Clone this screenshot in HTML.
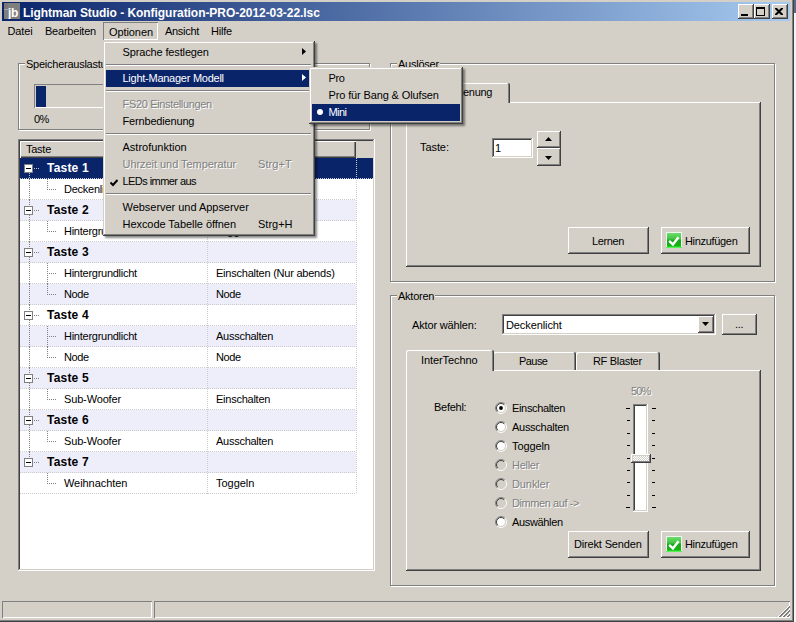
<!DOCTYPE html>
<html lang="de">
<head>
<meta charset="utf-8">
<title>Lightman Studio - Konfiguration-PRO-2012-03-22.lsc</title>
<style>
html,body{margin:0;padding:0}
body{width:796px;height:622px;position:relative;overflow:hidden;background:#d4d0c8;
 font-family:"Liberation Sans",sans-serif;font-size:11px;line-height:13px;color:#000;cursor:default}
.a{position:absolute}
.t{position:absolute;white-space:nowrap;line-height:13px;height:13px;letter-spacing:-.25px}
.tah{font-size:11px}
.dis{color:#808080;text-shadow:1px 1px 0 #fff}
.btn{position:absolute;background:#d4d0c8;box-sizing:border-box;
 box-shadow:inset -1px -1px #404040,inset 1px 1px #fff,inset -2px -2px #808080,inset 2px 2px #d4d0c8}
.sunk{position:absolute;background:#fff;box-sizing:border-box;
 box-shadow:inset -1px -1px #fff,inset 1px 1px #808080,inset -2px -2px #d4d0c8,inset 2px 2px #404040}
.grp{position:absolute;box-sizing:border-box;border:1px solid #808080;box-shadow:1px 1px 0 #fff,inset 1px 1px 0 #fff}
.grplbl{letter-spacing:-.25px;position:absolute;background:#d4d0c8;white-space:nowrap;line-height:13px;height:13px;padding:0 1px}
.menu{position:absolute;background:#d4d0c8;box-sizing:border-box;
 box-shadow:inset -1px -1px #404040,inset 1px 1px #d4d0c8,inset -2px -2px #808080,inset 2px 2px #fff,2px 2px 2px rgba(0,0,0,.45)}
.mi{position:absolute;left:3px;right:3px;height:17px}
.mi .t{top:2px}
.sep{position:absolute;left:3px;right:4px;height:1px;background:#808080;box-shadow:0 1px 0 #fff}
.hl{background:#0a246a;color:#fff}
.pane{position:absolute;box-sizing:border-box;background:#d4d0c8;
 box-shadow:inset -1px -1px #404040,inset 1px 1px #fff,inset -2px -2px #808080}
.tab{position:absolute;box-sizing:border-box;background:#d4d0c8;border-radius:2px 2px 0 0;
 box-shadow:inset -1px 0 #404040,inset 1px 1px #fff,inset -2px 0 #808080}
.row{position:absolute;left:20px;width:336px;height:21px;box-sizing:border-box}
.lav{background:#eeeefb}
.rad{position:absolute;width:12px;height:12px;border-radius:50%;box-sizing:border-box;background:#fff;
 box-shadow:inset 1px 1px 0 #808080,inset -1px -1px 0 #fff,inset 2px 2px 0 #404040,inset -2px -2px 0 #d4d0c8}
.rad.off{background:#d4d0c8}
.tick{position:absolute;height:1px;background:#000}
</style>
</head>
<body>

<!-- window frame -->
<div class="a" style="left:792px;top:0;width:1px;height:622px;background:#808080"></div>
<div class="a" style="left:793px;top:0;width:1px;height:622px;background:#404040"></div>
<div class="a" style="left:794px;top:0;width:2px;height:622px;background:#f4f4f4"></div>
<div class="a" style="left:794px;top:0;width:2px;height:13px;background:#5a6a8a"></div>
<div class="a" style="left:0;top:620px;width:793px;height:1px;background:#808080"></div>
<div class="a" style="left:0;top:621px;width:794px;height:1px;background:#404040"></div>

<!-- title bar -->
<div class="a" id="titlebar" style="left:2px;top:2px;width:788px;height:19px;background:linear-gradient(to right,#0a246a 0%,#a6caf0 100%)"></div>
<div class="a" style="left:4px;top:3px;width:16px;height:16px;background:#7f7f7f;overflow:hidden">
 <div class="a" style="left:0;top:0;width:4px;height:6px;background:#787878"></div><div class="a" style="left:0;top:6px;width:6px;height:1px;background:#a8a8a8"></div>
 <div class="t" style="left:4px;top:4px;color:#fff;font-weight:bold;font-size:12px;letter-spacing:-.3px">jb</div>
</div>
<div class="t" id="title" style="left:23px;top:7px;color:#fff;font-weight:bold;font-size:12px;letter-spacing:-.05px">Lightman Studio - Konfiguration-PRO-2012-03-22.lsc</div>

<!-- caption buttons -->
<div class="btn" style="left:738px;top:4px;width:16px;height:15px">
 <div class="a" style="left:3px;top:10px;width:7px;height:2px;background:#000"></div>
</div>
<div class="btn" style="left:754px;top:4px;width:16px;height:15px">
 <div class="a" style="left:2px;top:3px;width:9px;height:9px;box-sizing:border-box;border:1px solid #000;border-top-width:2px"></div>
</div>
<div class="btn" style="left:772px;top:4px;width:16px;height:15px">
 <svg class="a" style="left:3px;top:4px" width="8" height="7" viewBox="0 0 8 7"><path d="M1 0.5 L7 6.5 M7 0.5 L1 6.5" stroke="#000" stroke-width="2.1" stroke-linecap="square" fill="none"/></svg>
</div>

<!-- menu bar -->
<div class="t tah" style="left:7.5px;top:25px;letter-spacing:-0.14px">Datei</div>
<div class="t tah" style="left:45px;top:25px;letter-spacing:-0.22px">Bearbeiten</div>
<div class="a" style="left:103px;top:22px;width:55px;height:18px;box-sizing:border-box;box-shadow:inset 1px 1px #808080,inset -1px -1px #fff"></div>
<div class="t tah" style="left:109px;top:26px;letter-spacing:-0.085px">Optionen</div>
<div class="t tah" style="left:165px;top:25px;letter-spacing:-0.3px">Ansicht</div>
<div class="t tah" style="left:211px;top:25px;letter-spacing:-0.2px">Hilfe</div>

<!-- LEFT: Speicherauslastung -->
<div class="grp" style="left:18px;top:63px;width:352px;height:67px"></div>
<div class="grplbl" style="left:25px;top:58px">Speicherauslastung</div>
<div class="a" style="left:34px;top:84px;width:270px;height:24px;box-sizing:border-box;box-shadow:inset 1px 1px #808080,inset -1px -1px #fff"></div>
<div class="a" style="left:36px;top:86px;width:10px;height:21px;background:#0a246a"></div>
<div class="t" style="left:34px;top:113px;letter-spacing:-.7px">0%</div>

<!-- LEFT: tree list -->
<div class="sunk" id="list" style="left:18px;top:139px;width:357px;height:432px"></div>
<!--ROWS-->
<div class="a" style="left:20px;top:141px;width:353px;height:17px;background:#d4d0c8"></div>
<div class="a" style="left:20px;top:141px;width:336px;height:17px;box-sizing:border-box;box-shadow:inset 1px 1px #fff,inset -1px -1px #404040,inset -2px -2px #808080"></div>
<div class="t" style="left:26px;top:143px">Taste</div>
<div class="row hl" style="top:158px;width:353px">
<div class="a" style="left:0;top:20px;width:353px;height:1px;background:repeating-linear-gradient(to right,#cccccc 0,#cccccc 1px,transparent 1px,transparent 2px)"></div>
<div class="a" style="left:9px;top:15px;width:1px;height:6px;background:repeating-linear-gradient(to bottom,#c0c0c0 0,#c0c0c0 1px,transparent 1px,transparent 2px)"></div>
<div class="a" style="left:14px;top:10px;width:5px;height:1px;background:repeating-linear-gradient(to right,#c0c0c0 0,#c0c0c0 1px,transparent 1px,transparent 2px)"></div>
<div class="a" style="left:4px;top:6px;width:9px;height:9px;box-sizing:border-box;border:1px solid #808080;background:#fff"><div class="a" style="left:1px;top:3px;width:5px;height:1px;background:#000"></div></div>
<div class="t b" style="left:27px;top:4px;font-weight:bold;font-size:12px;letter-spacing:.2px">Taste 1</div>
</div>
<div class="row" style="top:179px">
<div class="a" style="left:0;top:20px;width:336px;height:1px;background:repeating-linear-gradient(to right,#cccccc 0,#cccccc 1px,transparent 1px,transparent 2px)"></div>
<div class="a" style="left:9px;top:0;width:1px;height:21px;background:repeating-linear-gradient(to bottom,#808080 0,#808080 1px,transparent 1px,transparent 2px)"></div>
<div class="a" style="left:27px;top:0;width:1px;height:10px;background:repeating-linear-gradient(to bottom,#808080 0,#808080 1px,transparent 1px,transparent 2px)"></div>
<div class="a" style="left:27px;top:10px;width:9px;height:1px;background:repeating-linear-gradient(to right,#808080 0,#808080 1px,transparent 1px,transparent 2px)"></div>
<div class="t" style="left:44px;top:4px;letter-spacing:-0.25px">Deckenlicht</div>
<div class="t" style="left:196px;top:4px;letter-spacing:-0.25px">Einschalten</div>
</div>
<div class="row lav" style="top:200px">
<div class="a" style="left:0;top:20px;width:336px;height:1px;background:repeating-linear-gradient(to right,#cccccc 0,#cccccc 1px,transparent 1px,transparent 2px)"></div>
<div class="a" style="left:9px;top:0;width:1px;height:6px;background:repeating-linear-gradient(to bottom,#808080 0,#808080 1px,transparent 1px,transparent 2px)"></div>
<div class="a" style="left:9px;top:15px;width:1px;height:6px;background:repeating-linear-gradient(to bottom,#808080 0,#808080 1px,transparent 1px,transparent 2px)"></div>
<div class="a" style="left:14px;top:10px;width:5px;height:1px;background:repeating-linear-gradient(to right,#808080 0,#808080 1px,transparent 1px,transparent 2px)"></div>
<div class="a" style="left:4px;top:6px;width:9px;height:9px;box-sizing:border-box;border:1px solid #808080;background:#fff"><div class="a" style="left:1px;top:3px;width:5px;height:1px;background:#000"></div></div>
<div class="t b" style="left:27px;top:4px;font-weight:bold;font-size:12px;letter-spacing:.2px">Taste 2</div>
</div>
<div class="row" style="top:221px">
<div class="a" style="left:0;top:20px;width:336px;height:1px;background:repeating-linear-gradient(to right,#cccccc 0,#cccccc 1px,transparent 1px,transparent 2px)"></div>
<div class="a" style="left:9px;top:0;width:1px;height:21px;background:repeating-linear-gradient(to bottom,#808080 0,#808080 1px,transparent 1px,transparent 2px)"></div>
<div class="a" style="left:27px;top:0;width:1px;height:10px;background:repeating-linear-gradient(to bottom,#808080 0,#808080 1px,transparent 1px,transparent 2px)"></div>
<div class="a" style="left:27px;top:10px;width:9px;height:1px;background:repeating-linear-gradient(to right,#808080 0,#808080 1px,transparent 1px,transparent 2px)"></div>
<div class="t" style="left:44px;top:4px;letter-spacing:-0.26px">Hintergrundlicht</div>
<div class="t" style="left:196px;top:4px;letter-spacing:-0.03px">Toggeln</div>
</div>
<div class="row lav" style="top:242px">
<div class="a" style="left:0;top:20px;width:336px;height:1px;background:repeating-linear-gradient(to right,#cccccc 0,#cccccc 1px,transparent 1px,transparent 2px)"></div>
<div class="a" style="left:9px;top:0;width:1px;height:6px;background:repeating-linear-gradient(to bottom,#808080 0,#808080 1px,transparent 1px,transparent 2px)"></div>
<div class="a" style="left:9px;top:15px;width:1px;height:6px;background:repeating-linear-gradient(to bottom,#808080 0,#808080 1px,transparent 1px,transparent 2px)"></div>
<div class="a" style="left:14px;top:10px;width:5px;height:1px;background:repeating-linear-gradient(to right,#808080 0,#808080 1px,transparent 1px,transparent 2px)"></div>
<div class="a" style="left:4px;top:6px;width:9px;height:9px;box-sizing:border-box;border:1px solid #808080;background:#fff"><div class="a" style="left:1px;top:3px;width:5px;height:1px;background:#000"></div></div>
<div class="t b" style="left:27px;top:4px;font-weight:bold;font-size:12px;letter-spacing:.2px">Taste 3</div>
</div>
<div class="row" style="top:263px">
<div class="a" style="left:0;top:20px;width:336px;height:1px;background:repeating-linear-gradient(to right,#cccccc 0,#cccccc 1px,transparent 1px,transparent 2px)"></div>
<div class="a" style="left:9px;top:0;width:1px;height:21px;background:repeating-linear-gradient(to bottom,#808080 0,#808080 1px,transparent 1px,transparent 2px)"></div>
<div class="a" style="left:27px;top:0;width:1px;height:21px;background:repeating-linear-gradient(to bottom,#808080 0,#808080 1px,transparent 1px,transparent 2px)"></div>
<div class="a" style="left:27px;top:10px;width:9px;height:1px;background:repeating-linear-gradient(to right,#808080 0,#808080 1px,transparent 1px,transparent 2px)"></div>
<div class="t" style="left:44px;top:4px;letter-spacing:-0.26px">Hintergrundlicht</div>
<div class="t" style="left:196px;top:4px;letter-spacing:-0.23px">Einschalten (Nur abends)</div>
</div>
<div class="row lav" style="top:284px">
<div class="a" style="left:0;top:20px;width:336px;height:1px;background:repeating-linear-gradient(to right,#cccccc 0,#cccccc 1px,transparent 1px,transparent 2px)"></div>
<div class="a" style="left:9px;top:0;width:1px;height:21px;background:repeating-linear-gradient(to bottom,#808080 0,#808080 1px,transparent 1px,transparent 2px)"></div>
<div class="a" style="left:27px;top:0;width:1px;height:10px;background:repeating-linear-gradient(to bottom,#808080 0,#808080 1px,transparent 1px,transparent 2px)"></div>
<div class="a" style="left:27px;top:10px;width:9px;height:1px;background:repeating-linear-gradient(to right,#808080 0,#808080 1px,transparent 1px,transparent 2px)"></div>
<div class="t" style="left:44px;top:4px;letter-spacing:-0.42px">Node</div>
<div class="t" style="left:196px;top:4px;letter-spacing:-0.42px">Node</div>
</div>
<div class="row" style="top:305px">
<div class="a" style="left:0;top:20px;width:336px;height:1px;background:repeating-linear-gradient(to right,#cccccc 0,#cccccc 1px,transparent 1px,transparent 2px)"></div>
<div class="a" style="left:9px;top:0;width:1px;height:6px;background:repeating-linear-gradient(to bottom,#808080 0,#808080 1px,transparent 1px,transparent 2px)"></div>
<div class="a" style="left:9px;top:15px;width:1px;height:6px;background:repeating-linear-gradient(to bottom,#808080 0,#808080 1px,transparent 1px,transparent 2px)"></div>
<div class="a" style="left:14px;top:10px;width:5px;height:1px;background:repeating-linear-gradient(to right,#808080 0,#808080 1px,transparent 1px,transparent 2px)"></div>
<div class="a" style="left:4px;top:6px;width:9px;height:9px;box-sizing:border-box;border:1px solid #808080;background:#fff"><div class="a" style="left:1px;top:3px;width:5px;height:1px;background:#000"></div></div>
<div class="t b" style="left:27px;top:4px;font-weight:bold;font-size:12px;letter-spacing:.2px">Taste 4</div>
</div>
<div class="row lav" style="top:326px">
<div class="a" style="left:0;top:20px;width:336px;height:1px;background:repeating-linear-gradient(to right,#cccccc 0,#cccccc 1px,transparent 1px,transparent 2px)"></div>
<div class="a" style="left:9px;top:0;width:1px;height:21px;background:repeating-linear-gradient(to bottom,#808080 0,#808080 1px,transparent 1px,transparent 2px)"></div>
<div class="a" style="left:27px;top:0;width:1px;height:21px;background:repeating-linear-gradient(to bottom,#808080 0,#808080 1px,transparent 1px,transparent 2px)"></div>
<div class="a" style="left:27px;top:10px;width:9px;height:1px;background:repeating-linear-gradient(to right,#808080 0,#808080 1px,transparent 1px,transparent 2px)"></div>
<div class="t" style="left:44px;top:4px;letter-spacing:-0.26px">Hintergrundlicht</div>
<div class="t" style="left:196px;top:4px;letter-spacing:-0.26px">Ausschalten</div>
</div>
<div class="row" style="top:347px">
<div class="a" style="left:0;top:20px;width:336px;height:1px;background:repeating-linear-gradient(to right,#cccccc 0,#cccccc 1px,transparent 1px,transparent 2px)"></div>
<div class="a" style="left:9px;top:0;width:1px;height:21px;background:repeating-linear-gradient(to bottom,#808080 0,#808080 1px,transparent 1px,transparent 2px)"></div>
<div class="a" style="left:27px;top:0;width:1px;height:10px;background:repeating-linear-gradient(to bottom,#808080 0,#808080 1px,transparent 1px,transparent 2px)"></div>
<div class="a" style="left:27px;top:10px;width:9px;height:1px;background:repeating-linear-gradient(to right,#808080 0,#808080 1px,transparent 1px,transparent 2px)"></div>
<div class="t" style="left:44px;top:4px;letter-spacing:-0.42px">Node</div>
<div class="t" style="left:196px;top:4px;letter-spacing:-0.42px">Node</div>
</div>
<div class="row lav" style="top:368px">
<div class="a" style="left:0;top:20px;width:336px;height:1px;background:repeating-linear-gradient(to right,#cccccc 0,#cccccc 1px,transparent 1px,transparent 2px)"></div>
<div class="a" style="left:9px;top:0;width:1px;height:6px;background:repeating-linear-gradient(to bottom,#808080 0,#808080 1px,transparent 1px,transparent 2px)"></div>
<div class="a" style="left:9px;top:15px;width:1px;height:6px;background:repeating-linear-gradient(to bottom,#808080 0,#808080 1px,transparent 1px,transparent 2px)"></div>
<div class="a" style="left:14px;top:10px;width:5px;height:1px;background:repeating-linear-gradient(to right,#808080 0,#808080 1px,transparent 1px,transparent 2px)"></div>
<div class="a" style="left:4px;top:6px;width:9px;height:9px;box-sizing:border-box;border:1px solid #808080;background:#fff"><div class="a" style="left:1px;top:3px;width:5px;height:1px;background:#000"></div></div>
<div class="t b" style="left:27px;top:4px;font-weight:bold;font-size:12px;letter-spacing:.2px">Taste 5</div>
</div>
<div class="row" style="top:389px">
<div class="a" style="left:0;top:20px;width:336px;height:1px;background:repeating-linear-gradient(to right,#cccccc 0,#cccccc 1px,transparent 1px,transparent 2px)"></div>
<div class="a" style="left:9px;top:0;width:1px;height:21px;background:repeating-linear-gradient(to bottom,#808080 0,#808080 1px,transparent 1px,transparent 2px)"></div>
<div class="a" style="left:27px;top:0;width:1px;height:10px;background:repeating-linear-gradient(to bottom,#808080 0,#808080 1px,transparent 1px,transparent 2px)"></div>
<div class="a" style="left:27px;top:10px;width:9px;height:1px;background:repeating-linear-gradient(to right,#808080 0,#808080 1px,transparent 1px,transparent 2px)"></div>
<div class="t" style="left:44px;top:4px;letter-spacing:-0.15px">Sub-Woofer</div>
<div class="t" style="left:196px;top:4px;letter-spacing:-0.25px">Einschalten</div>
</div>
<div class="row lav" style="top:410px">
<div class="a" style="left:0;top:20px;width:336px;height:1px;background:repeating-linear-gradient(to right,#cccccc 0,#cccccc 1px,transparent 1px,transparent 2px)"></div>
<div class="a" style="left:9px;top:0;width:1px;height:6px;background:repeating-linear-gradient(to bottom,#808080 0,#808080 1px,transparent 1px,transparent 2px)"></div>
<div class="a" style="left:9px;top:15px;width:1px;height:6px;background:repeating-linear-gradient(to bottom,#808080 0,#808080 1px,transparent 1px,transparent 2px)"></div>
<div class="a" style="left:14px;top:10px;width:5px;height:1px;background:repeating-linear-gradient(to right,#808080 0,#808080 1px,transparent 1px,transparent 2px)"></div>
<div class="a" style="left:4px;top:6px;width:9px;height:9px;box-sizing:border-box;border:1px solid #808080;background:#fff"><div class="a" style="left:1px;top:3px;width:5px;height:1px;background:#000"></div></div>
<div class="t b" style="left:27px;top:4px;font-weight:bold;font-size:12px;letter-spacing:.2px">Taste 6</div>
</div>
<div class="row" style="top:431px">
<div class="a" style="left:0;top:20px;width:336px;height:1px;background:repeating-linear-gradient(to right,#cccccc 0,#cccccc 1px,transparent 1px,transparent 2px)"></div>
<div class="a" style="left:9px;top:0;width:1px;height:21px;background:repeating-linear-gradient(to bottom,#808080 0,#808080 1px,transparent 1px,transparent 2px)"></div>
<div class="a" style="left:27px;top:0;width:1px;height:10px;background:repeating-linear-gradient(to bottom,#808080 0,#808080 1px,transparent 1px,transparent 2px)"></div>
<div class="a" style="left:27px;top:10px;width:9px;height:1px;background:repeating-linear-gradient(to right,#808080 0,#808080 1px,transparent 1px,transparent 2px)"></div>
<div class="t" style="left:44px;top:4px;letter-spacing:-0.15px">Sub-Woofer</div>
<div class="t" style="left:196px;top:4px;letter-spacing:-0.26px">Ausschalten</div>
</div>
<div class="row lav" style="top:452px">
<div class="a" style="left:0;top:20px;width:336px;height:1px;background:repeating-linear-gradient(to right,#cccccc 0,#cccccc 1px,transparent 1px,transparent 2px)"></div>
<div class="a" style="left:9px;top:0;width:1px;height:6px;background:repeating-linear-gradient(to bottom,#808080 0,#808080 1px,transparent 1px,transparent 2px)"></div>
<div class="a" style="left:14px;top:10px;width:5px;height:1px;background:repeating-linear-gradient(to right,#808080 0,#808080 1px,transparent 1px,transparent 2px)"></div>
<div class="a" style="left:4px;top:6px;width:9px;height:9px;box-sizing:border-box;border:1px solid #808080;background:#fff"><div class="a" style="left:1px;top:3px;width:5px;height:1px;background:#000"></div></div>
<div class="t b" style="left:27px;top:4px;font-weight:bold;font-size:12px;letter-spacing:.2px">Taste 7</div>
</div>
<div class="row" style="top:473px">
<div class="a" style="left:0;top:20px;width:336px;height:1px;background:repeating-linear-gradient(to right,#cccccc 0,#cccccc 1px,transparent 1px,transparent 2px)"></div>
<div class="a" style="left:27px;top:0;width:1px;height:10px;background:repeating-linear-gradient(to bottom,#808080 0,#808080 1px,transparent 1px,transparent 2px)"></div>
<div class="a" style="left:27px;top:10px;width:9px;height:1px;background:repeating-linear-gradient(to right,#808080 0,#808080 1px,transparent 1px,transparent 2px)"></div>
<div class="t" style="left:44px;top:4px;letter-spacing:-0.06px">Weihnachten</div>
<div class="t" style="left:196px;top:4px;letter-spacing:-0.03px">Toggeln</div>
</div>
<div class="a" style="left:207px;top:179px;width:1px;height:315px;background:repeating-linear-gradient(to bottom,#cccccc 0,#cccccc 1px,transparent 1px,transparent 2px)"></div>
<div class="a" style="left:356px;top:158px;width:1px;height:336px;background:repeating-linear-gradient(to bottom,#cccccc 0,#cccccc 1px,transparent 1px,transparent 2px)"></div>
<!--/ROWS-->

<!-- RIGHT: Auslöser -->
<div class="grp" style="left:390px;top:63px;width:385px;height:219px"></div>
<div class="grplbl" style="left:397px;top:58px">Auslöser</div>


<!-- Auslöser tab control -->
<div class="pane" style="left:406px;top:102px;width:355px;height:165px"></div>
<div class="tab" style="left:406px;top:83px;width:104px;height:20px;box-shadow:inset -1px 0 #404040,inset 1px 1px #fff,inset -2px 0 #808080"></div>
<div class="t" style="left:422px;top:86px;letter-spacing:-0.3px">Fernbedienung</div>
<div class="t" style="left:420px;top:141px;letter-spacing:-.08px">Taste:</div>
<div class="sunk" style="left:492px;top:138px;width:41px;height:20px"></div>
<div class="t" style="left:495px;top:142px">1</div>
<div class="btn" style="left:537px;top:131px;width:24px;height:17px"><svg class="a" style="left:8px;top:6px" width="7" height="4" viewBox="0 0 7 4"><path d="M0 4 L3.5 0 L7 4 Z" fill="#000"/></svg></div>
<div class="btn" style="left:537px;top:148px;width:24px;height:18px"><svg class="a" style="left:8px;top:8px" width="7" height="4" viewBox="0 0 7 4"><path d="M0 0 L7 0 L3.5 4 Z" fill="#000"/></svg></div>
<div class="btn" style="left:568px;top:227px;width:81px;height:27px"></div>
<div class="t" style="left:592px;top:235px;letter-spacing:-.38px">Lernen</div>
<div class="btn" style="left:661px;top:227px;width:89px;height:27px"></div>
<svg class="a" style="left:666px;top:232px" width="16" height="16" viewBox="0 0 16 16"><defs><linearGradient id="g1" x1="0" y1="0" x2="0" y2="1"><stop offset="0" stop-color="#6fdc6f"/><stop offset="0.45" stop-color="#3cc43c"/><stop offset="0.5" stop-color="#17a617"/><stop offset="0.9" stop-color="#14b414"/><stop offset="1" stop-color="#30e030"/></linearGradient></defs><rect x="0" y="0" width="16" height="16" fill="#eef8ee"/><rect x="0" y="15" width="16" height="1" fill="#58f058"/><rect x="1" y="1" width="14" height="14" fill="url(#g1)"/><path d="M3.1 8.9 L6.9 12.4 L12.5 5.2" stroke="#fff" stroke-width="2.5" fill="none"/></svg>
<div class="t" style="left:685px;top:235px;letter-spacing:-.32px">Hinzufügen</div>

<!-- RIGHT: Aktoren -->
<div class="grp" style="left:390px;top:295px;width:385px;height:291px"></div>
<div class="grplbl" style="left:397px;top:290px">Aktoren</div>


<!-- Aktoren content -->
<div class="t" style="left:412px;top:319px;letter-spacing:-.15px">Aktor wählen:</div>
<div class="sunk" style="left:502px;top:314px;width:214px;height:21px"></div>
<div class="t" style="left:506px;top:319px;letter-spacing:-.1px">Deckenlicht</div>
<div class="btn" style="left:698px;top:316px;width:16px;height:17px"><svg class="a" style="left:4px;top:6px" width="7" height="4" viewBox="0 0 7 4"><path d="M0 0 L7 0 L3.5 4 Z" fill="#000"/></svg></div>
<div class="btn" style="left:722px;top:314px;width:35px;height:21px"></div>
<div class="t" style="left:735px;top:318px">...</div>
<div class="pane" style="left:406px;top:370px;width:355px;height:201px"></div>
<div class="tab" style="left:493px;top:352px;width:83px;height:18px"></div>
<div class="tab" style="left:576px;top:352px;width:84px;height:18px"></div>
<div class="tab" style="left:406px;top:350px;width:88px;height:21px"></div>
<div class="t" style="left:421px;top:354px;letter-spacing:-.09px">InterTechno</div>
<div class="t" style="left:519px;top:355px;letter-spacing:-.56px">Pause</div>
<div class="t" style="left:593px;top:355px;letter-spacing:-.32px">RF Blaster</div>
<div class="t" style="left:434px;top:401px;letter-spacing:-.27px">Befehl:</div>
<svg class="a" style="left:495px;top:402px" width="12" height="12" viewBox="0 0 12 12"><circle cx="6" cy="6" r="4.5" fill="#fff"/><path d="M2.111 9.889 A5.5 5.5 0 0 1 9.889 2.111" stroke="#808080" fill="none"/><path d="M9.889 2.111 A5.5 5.5 0 0 1 2.111 9.889" stroke="#fff" fill="none"/><path d="M2.818 9.182 A4.5 4.5 0 0 1 9.182 2.818" stroke="#404040" fill="none"/><path d="M9.182 2.818 A4.5 4.5 0 0 1 2.818 9.182" stroke="#d4d0c8" fill="none"/><circle cx="6" cy="6" r="1.9" fill="#000"/></svg>
<div class="t" style="left:512px;top:402px;letter-spacing:-0.34px">Einschalten</div>
<svg class="a" style="left:495px;top:421px" width="12" height="12" viewBox="0 0 12 12"><circle cx="6" cy="6" r="4.5" fill="#fff"/><path d="M2.111 9.889 A5.5 5.5 0 0 1 9.889 2.111" stroke="#808080" fill="none"/><path d="M9.889 2.111 A5.5 5.5 0 0 1 2.111 9.889" stroke="#fff" fill="none"/><path d="M2.818 9.182 A4.5 4.5 0 0 1 9.182 2.818" stroke="#404040" fill="none"/><path d="M9.182 2.818 A4.5 4.5 0 0 1 2.818 9.182" stroke="#d4d0c8" fill="none"/></svg>
<div class="t" style="left:512px;top:421px;letter-spacing:-0.28px">Ausschalten</div>
<svg class="a" style="left:495px;top:440px" width="12" height="12" viewBox="0 0 12 12"><circle cx="6" cy="6" r="4.5" fill="#fff"/><path d="M2.111 9.889 A5.5 5.5 0 0 1 9.889 2.111" stroke="#808080" fill="none"/><path d="M9.889 2.111 A5.5 5.5 0 0 1 2.111 9.889" stroke="#fff" fill="none"/><path d="M2.818 9.182 A4.5 4.5 0 0 1 9.182 2.818" stroke="#404040" fill="none"/><path d="M9.182 2.818 A4.5 4.5 0 0 1 2.818 9.182" stroke="#d4d0c8" fill="none"/></svg>
<div class="t" style="left:512px;top:440px;letter-spacing:-0.09px">Toggeln</div>
<svg class="a" style="left:495px;top:459px" width="12" height="12" viewBox="0 0 12 12"><circle cx="6" cy="6" r="4.5" fill="#d4d0c8"/><path d="M2.111 9.889 A5.5 5.5 0 0 1 9.889 2.111" stroke="#808080" fill="none"/><path d="M9.889 2.111 A5.5 5.5 0 0 1 2.111 9.889" stroke="#fff" fill="none"/><path d="M2.818 9.182 A4.5 4.5 0 0 1 9.182 2.818" stroke="#404040" fill="none"/><path d="M9.182 2.818 A4.5 4.5 0 0 1 2.818 9.182" stroke="#d4d0c8" fill="none"/></svg>
<div class="t dis" style="left:512px;top:459px;letter-spacing:-0.28px">Heller</div>
<svg class="a" style="left:495px;top:478px" width="12" height="12" viewBox="0 0 12 12"><circle cx="6" cy="6" r="4.5" fill="#d4d0c8"/><path d="M2.111 9.889 A5.5 5.5 0 0 1 9.889 2.111" stroke="#808080" fill="none"/><path d="M9.889 2.111 A5.5 5.5 0 0 1 2.111 9.889" stroke="#fff" fill="none"/><path d="M2.818 9.182 A4.5 4.5 0 0 1 9.182 2.818" stroke="#404040" fill="none"/><path d="M9.182 2.818 A4.5 4.5 0 0 1 2.818 9.182" stroke="#d4d0c8" fill="none"/></svg>
<div class="t dis" style="left:512px;top:478px;letter-spacing:-0.1px">Dunkler</div>
<svg class="a" style="left:495px;top:497px" width="12" height="12" viewBox="0 0 12 12"><circle cx="6" cy="6" r="4.5" fill="#d4d0c8"/><path d="M2.111 9.889 A5.5 5.5 0 0 1 9.889 2.111" stroke="#808080" fill="none"/><path d="M9.889 2.111 A5.5 5.5 0 0 1 2.111 9.889" stroke="#fff" fill="none"/><path d="M2.818 9.182 A4.5 4.5 0 0 1 9.182 2.818" stroke="#404040" fill="none"/><path d="M9.182 2.818 A4.5 4.5 0 0 1 2.818 9.182" stroke="#d4d0c8" fill="none"/></svg>
<div class="t dis" style="left:512px;top:497px;letter-spacing:-0.42px">Dimmen auf -&gt;</div>
<svg class="a" style="left:495px;top:516px" width="12" height="12" viewBox="0 0 12 12"><circle cx="6" cy="6" r="4.5" fill="#fff"/><path d="M2.111 9.889 A5.5 5.5 0 0 1 9.889 2.111" stroke="#808080" fill="none"/><path d="M9.889 2.111 A5.5 5.5 0 0 1 2.111 9.889" stroke="#fff" fill="none"/><path d="M2.818 9.182 A4.5 4.5 0 0 1 9.182 2.818" stroke="#404040" fill="none"/><path d="M9.182 2.818 A4.5 4.5 0 0 1 2.818 9.182" stroke="#d4d0c8" fill="none"/></svg>
<div class="t" style="left:512px;top:516px;letter-spacing:-0.34px">Auswählen</div>
<div class="t dis" style="left:631px;top:385px;letter-spacing:-.9px">50%</div>
<div class="sunk" style="left:633px;top:404px;width:15px;height:108px"></div>
<div class="tick" style="left:626px;top:408px;width:4px"></div>
<div class="tick" style="left:652px;top:408px;width:4px"></div>
<div class="tick" style="left:627px;top:420px;width:3px"></div>
<div class="tick" style="left:652px;top:420px;width:3px"></div>
<div class="tick" style="left:627px;top:433px;width:3px"></div>
<div class="tick" style="left:652px;top:433px;width:3px"></div>
<div class="tick" style="left:627px;top:445px;width:3px"></div>
<div class="tick" style="left:652px;top:445px;width:3px"></div>
<div class="tick" style="left:627px;top:458px;width:3px"></div>
<div class="tick" style="left:652px;top:458px;width:3px"></div>
<div class="tick" style="left:627px;top:470px;width:3px"></div>
<div class="tick" style="left:652px;top:470px;width:3px"></div>
<div class="tick" style="left:627px;top:482px;width:3px"></div>
<div class="tick" style="left:652px;top:482px;width:3px"></div>
<div class="tick" style="left:627px;top:495px;width:3px"></div>
<div class="tick" style="left:652px;top:495px;width:3px"></div>
<div class="tick" style="left:626px;top:507px;width:4px"></div>
<div class="tick" style="left:652px;top:507px;width:4px"></div>
<div class="btn" style="left:631px;top:454px;width:20px;height:9px;background:repeating-conic-gradient(#fff 0 25%,#d4d0c8 0 50%) 0 0/2px 2px"></div>
<div class="btn" style="left:568px;top:531px;width:81px;height:27px"></div>
<div class="t" style="left:574px;top:538px;letter-spacing:-.16px">Direkt Senden</div>
<div class="btn" style="left:661px;top:531px;width:89px;height:27px"></div>
<svg class="a" style="left:666px;top:536px" width="16" height="16" viewBox="0 0 16 16"><defs><linearGradient id="g2" x1="0" y1="0" x2="0" y2="1"><stop offset="0" stop-color="#6fdc6f"/><stop offset="0.45" stop-color="#3cc43c"/><stop offset="0.5" stop-color="#17a617"/><stop offset="0.9" stop-color="#14b414"/><stop offset="1" stop-color="#30e030"/></linearGradient></defs><rect x="0" y="0" width="16" height="16" fill="#eef8ee"/><rect x="0" y="15" width="16" height="1" fill="#58f058"/><rect x="1" y="1" width="14" height="14" fill="url(#g2)"/><path d="M3.1 8.9 L6.9 12.4 L12.5 5.2" stroke="#fff" stroke-width="2.5" fill="none"/></svg>
<div class="t" style="left:685px;top:538px;letter-spacing:-.32px">Hinzufügen</div>


<!-- dropdown menu: Optionen -->
<div class="menu" style="left:103px;top:41px;width:212px;height:195px">
 <div class="mi" style="top:3px"><div class="t" style="left:16.5px;letter-spacing:-0.14px">Sprache festlegen</div><svg class="a" style="right:6px;top:4px" width="4" height="7" viewBox="0 0 4 7"><path d="M0 0 L4 3.5 L0 7 Z" fill="#000"/></svg></div>
 <div class="sep" style="top:23px"></div>
 <div class="mi hl" style="top:29px"><div class="t" style="left:16.5px;letter-spacing:-0.255px">Light-Manager Modell</div><svg class="a" style="right:6px;top:4px" width="4" height="7" viewBox="0 0 4 7"><path d="M0 0 L4 3.5 L0 7 Z" fill="#fff"/></svg></div>
 <div class="sep" style="top:49px"></div>
 <div class="mi" style="top:55px"><div class="t dis" style="left:16.5px;letter-spacing:-0.34px">FS20 Einstellungen</div></div>
 <div class="mi" style="top:72px"><div class="t" style="left:16.5px;letter-spacing:-0.17px">Fernbedienung</div></div>
 <div class="sep" style="top:92px"></div>
 <div class="mi" style="top:98px"><div class="t" style="left:16.5px;letter-spacing:0px">Astrofunktion</div></div>
 <div class="mi" style="top:115px"><div class="t dis" style="left:16.5px;letter-spacing:-0.05px">Uhrzeit und Temperatur</div><div class="t dis" style="left:152px;letter-spacing:0.1px">Strg+T</div></div>
 <div class="mi" style="top:132px"><svg class="a" style="left:4px;top:6px" width="8" height="8" viewBox="0 0 8 8"><path d="M0.5 3.5 L3 6 L7.5 1" stroke="#000" stroke-width="2" fill="none"/></svg><div class="t" style="left:16.5px;letter-spacing:-0.56px">LEDs immer aus</div></div>
 <div class="sep" style="top:152px"></div>
 <div class="mi" style="top:158px"><div class="t" style="left:16.5px;letter-spacing:-0.03px">Webserver und Appserver</div></div>
 <div class="mi" style="top:175px"><div class="t" style="left:16.5px;letter-spacing:-0.05px">Hexcode Tabelle öffnen</div><div class="t" style="left:152px;letter-spacing:0px">Strg+H</div></div>
</div>
<!-- submenu: Light-Manager Modell -->
<div class="menu" style="left:309px;top:67px;width:154px;height:57px">
 <div class="mi" style="top:3px"><div class="t" style="left:16.5px;letter-spacing:-0.4px">Pro</div></div>
 <div class="mi" style="top:20px"><div class="t" style="left:16.5px;letter-spacing:-0.13px">Pro für Bang &amp; Olufsen</div></div>
 <div class="mi hl" style="top:37px"><div class="a" style="left:5px;top:5px;width:6px;height:6px;border-radius:50%;background:#fff"></div><div class="t" style="left:16.5px;letter-spacing:-0.6px">Mini</div></div>
</div>

<!-- status bar -->
<div class="a" style="left:2px;top:601px;width:150px;height:17px;box-sizing:border-box;box-shadow:inset 1px 1px #808080,inset -1px -1px #fff"></div>
<div class="a" style="left:154px;top:601px;width:636px;height:17px;box-sizing:border-box;box-shadow:inset 1px 1px #808080,inset -1px -1px #fff"></div>
<svg class="a" style="left:777px;top:604px" width="13" height="13" viewBox="0 0 13 13" shape-rendering="crispEdges">
<g stroke-width="1.2">
<path d="M13 1 L1 13 M13 5 L5 13 M13 9 L9 13" stroke="#fff"/>
<path d="M13 2 L2 13 M13 3 L3 13 M13 6 L6 13 M13 7 L7 13 M13 10 L10 13 M13 11 L11 13" stroke="#808080"/>
</g></svg>

</body>
</html>
